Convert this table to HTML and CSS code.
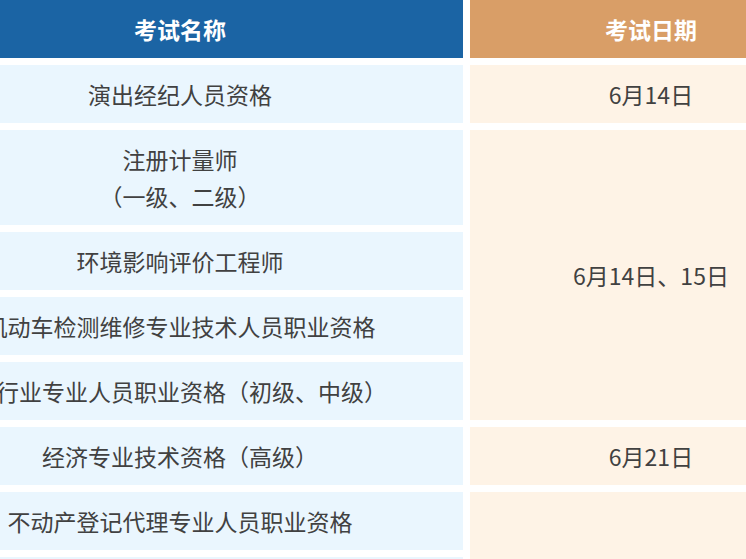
FILE: index.html
```html
<!DOCTYPE html>
<html lang="zh-CN">
<head>
<meta charset="utf-8">
<title>考试安排</title>
<link rel="stylesheet" href="styles.css">
</head>
<body>
<table class="exam-table">
  <colgroup>
    <col class="col-name">
    <col class="col-date">
  </colgroup>
  <thead>
    <tr class="row-head">
      <th class="head-name">考试名称</th>
      <th class="head-date">考试日期</th>
    </tr>
  </thead>
  <tbody>
    <tr class="row">
      <td class="name">演出经纪人员资格</td>
      <td class="date">6月14日</td>
    </tr>
    <tr class="row row-tall">
      <td class="name">注册计量师<br>（一级、二级）</td>
      <td class="date" rowspan="4">6月14日、15日</td>
    </tr>
    <tr class="row">
      <td class="name">环境影响评价工程师</td>
    </tr>
    <tr class="row">
      <td class="name">机动车检测维修专业技术人员职业资格</td>
    </tr>
    <tr class="row">
      <td class="name">银行业专业人员职业资格（初级、中级）</td>
    </tr>
    <tr class="row">
      <td class="name">经济专业技术资格（高级）</td>
      <td class="date">6月21日</td>
    </tr>
    <tr class="row">
      <td class="name">不动产登记代理专业人员职业资格</td>
      <td class="date" rowspan="2"></td>
    </tr>
    <tr class="row">
      <td class="name"></td>
    </tr>
  </tbody>
</table>
</body>
</html>
```

FILE: styles.css
```css
html, body {
  margin: 0;
  padding: 0;
  overflow: hidden;
  background: #ffffff;
  width: 746px;
  height: 559px;
}

.exam-table {
  border-collapse: separate;
  border-spacing: 7px;
  table-layout: fixed;
  width: 949px;
  margin: -7px 0 0 -110px;
  font-family: "Noto Sans CJK SC", "Noto Sans", sans-serif;
  font-size: 23px;
  color: #414141;
}

.col-name { width: 566px; }
.col-date { width: 362px; }

.exam-table th,
.exam-table td {
  padding: 0;
  text-align: center;
  vertical-align: middle;
  line-height: 37px;
}

.row-head th {
  height: 58px;
  color: #ffffff;
  font-weight: 700;
}

.head-name { background: #1b64a4; }
.head-date { background: #d99e67; }

.row td { height: 58px; }
.row-tall td.name { height: 95px; }

.name {
  background: #eaf6fe;
  white-space: nowrap;
}

.date {
  background: #fef3e6;
  white-space: nowrap;
}
```
